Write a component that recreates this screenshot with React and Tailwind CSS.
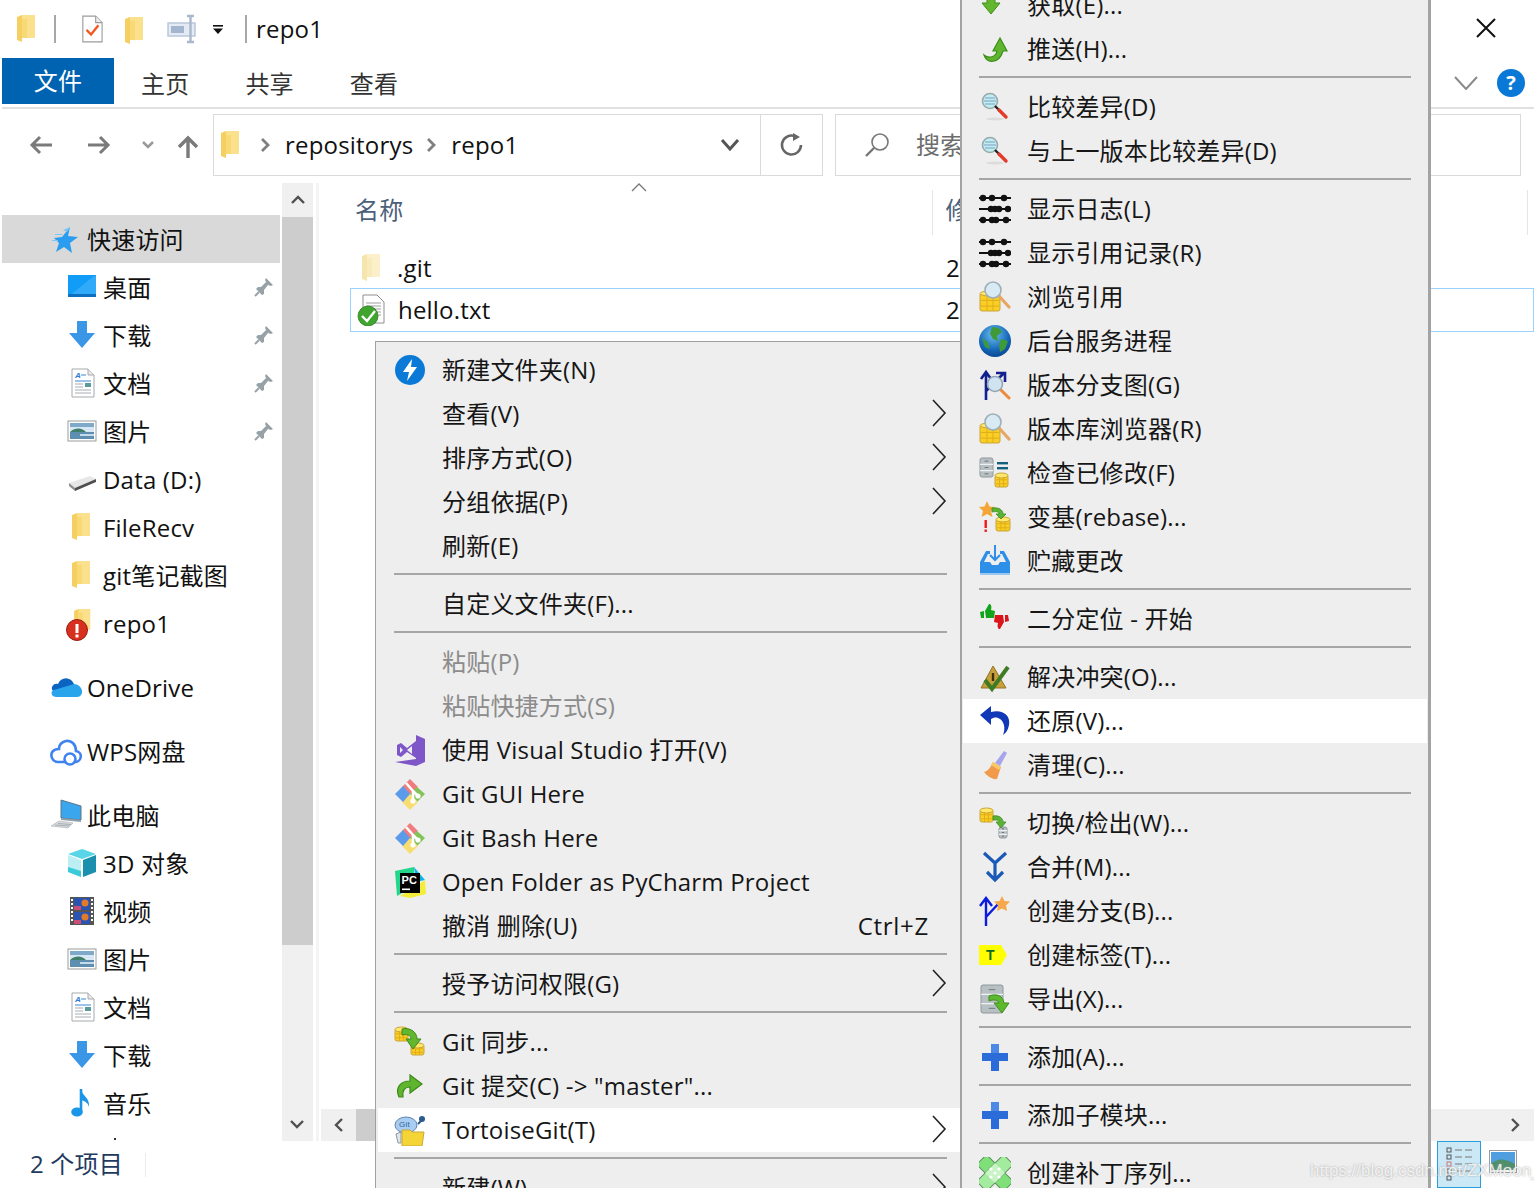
import React from "react";

const Svg = ({ w = 32, h = 32, vb, children, className = "" }) => (
  <svg width={w} height={h} viewBox={vb || `0 0 ${w} ${h}`} className={`shrink-0 ${className}`}>{children}</svg>
);

/* ---------- shared pieces ---------- */
const Coins = ({ x, y, w, h }) => (
  <g>
    <rect x={x} y={y + 2} width={w} height={h - 3} rx={2} fill="#f8cf22" stroke="#c9a43a" strokeWidth="1" />
    <ellipse cx={x + w / 2} cy={y + 2.5} rx={w / 2} ry={2.5} fill="#ffe86a" stroke="#c9a43a" strokeWidth="1" />
    <path d={`M${x + 1} ${y + h * 0.45}H${x + w - 1}M${x + 1} ${y + h * 0.72}H${x + w - 1}M${x + w * 0.35} ${y + 4}V${y + h - 1}M${x + w * 0.65} ${y + 4}V${y + h - 1}`} stroke="#e2ad1c" strokeWidth="1" />
  </g>
);
const Cabinet = ({ x, y, w, h }) => (
  <g>
    <rect x={x} y={y} width={w} height={h} rx={2} fill="#b9c0c4" stroke="#8f989d" strokeWidth="1" />
    <path d={`M${x} ${y + h / 3}H${x + w}M${x} ${y + (2 * h) / 3}H${x + w}`} stroke="#eef1f2" strokeWidth="1.4" />
    <path d={`M${x + w * 0.35} ${y + h / 6}H${x + w * 0.65}M${x + w * 0.35} ${y + h / 2}H${x + w * 0.65}M${x + w * 0.35} ${y + (5 * h) / 6}H${x + w * 0.65}`} stroke="#6f777b" strokeWidth="1" />
  </g>
);

const FolderIcon = ({ pale, w = 20, h = 28 }) => (
  <Svg w={w} h={h} vb="0 0 20 28">
    <path d="M0 2L5 0H18V23H5V27L0 25Z" fill={pale ? "#f6e6ae" : "#f6cf63"} />
    <path d="M5 0H18V23H5Z" fill={pale ? "#fbf0c9" : "#fbe08e"} />
    <path d="M5 4H10V23H5Z" fill={pale ? "#f8ebbb" : "#f9d974"} />
  </Svg>
);

/* ---------- menu icons ---------- */
const IBolt = () => (
  <Svg>
    <circle cx="16" cy="16" r="15" fill="#0b7ad6" />
    <path d="M18 5L9 18H15L13 27L23 13H17Z" fill="#fff" />
  </Svg>
);
const IVS = () => (
  <Svg>
    <path d="M22 1L31 5V28L22 32L1 28L22 25Z" fill="#7f56c8" />
    <path d="M3 11L7 9L13 14L22 7V24L13 18L7 23L3 21Z" fill="#7f56c8" />
    <path d="M6 13V19L9 16Z M18 12L13 16L18 20Z" fill="#eeeeee" />
  </Svg>
);
const IGit = () => (
  <Svg>
    <path d="M16 1L24 9L16 17L8 9Z" fill="#ef7d7d" />
    <path d="M23 9L31 16L23 24L16 16Z" fill="#82c45a" />
    <path d="M16 16L24 24L16 32L8 24Z" fill="#f7dd6f" />
    <path d="M9 8L16 16L9 24L1 16Z" fill="#5b9bea" />
    <path d="M12 5L19 13M19 13V22M19 13L23 17" stroke="#fff" strokeWidth="2.6" fill="none" />
    <circle cx="19" cy="23" r="2.6" fill="#fff" />
    <circle cx="24" cy="18" r="2.6" fill="#fff" />
  </Svg>
);
const IPC = () => (
  <Svg>
    <path d="M1 5L20 1L20 20L3 30Z" fill="#21d789" />
    <path d="M20 1L31 14L22 16Z" fill="#09b6e8" />
    <path d="M6 30L31 14L32 28L16 32Z" fill="#f4ee3b" />
    <rect x="6" y="7" width="20" height="20" fill="#000" />
    <text x="7.5" y="18" fill="#fff" fontSize="11" fontWeight="700" fontFamily="Liberation Sans, sans-serif">PC</text>
    <rect x="8" y="22.5" width="8" height="1.6" fill="#fff" />
  </Svg>
);
const ISync = () => (
  <Svg>
    <Coins x={1} y={1} w={13} h={15} />
    <Coins x={17} y={17} w={13} h={13} />
    <path d="M8 3C16 1 23 6 23 13H27L19 23L12 13H17C17 9 13 8 8 9Z" fill="#63b72f" stroke="#3f8a17" strokeWidth="1" />
  </Svg>
);
const ICommit = () => (
  <Svg>
    <path d="M5 27C1 18 6 11 16 11V5L28 14L16 23V17C11 17 8 20 9 27Z" fill="#5fb52e" stroke="#3d8a19" strokeWidth="1.2" />
  </Svg>
);
const ITortoise = () => (
  <Svg>
    <ellipse cx="12" cy="11" rx="11" ry="8" fill="#a9cdf0" stroke="#5d86b5" strokeWidth="1" />
    <text x="5" y="13" fontSize="8" fill="#2b5f9a" fontFamily="Liberation Sans, sans-serif">Git</text>
    <circle cx="28" cy="5" r="3" fill="#2a5a8f" />
    <path d="M24 10L28 6" stroke="#2a5a8f" strokeWidth="2" />
    <path d="M2 20L7 18V29H4Z" fill="#dfe7ee" stroke="#8a97a3" strokeWidth="1" />
    <path d="M8 16H16L18 18H30L28 32H8Z" fill="#f5d535" stroke="#c7a73a" strokeWidth="1" />
  </Svg>
);
const IPull = () => (
  <Svg>
    <path d="M8 0H16V14H21L12 25L3 14H8Z" fill="#62b72e" stroke="#3f8f1c" strokeWidth="1" />
  </Svg>
);
const IPush = () => (
  <Svg>
    <path d="M5 22C8 31 20 31 24 18H28L21 5L14 18H18C17 24 10 26 5 22Z" fill="#5fb52e" stroke="#3c8d19" strokeWidth="1.2" />
  </Svg>
);
const IDiff = () => (
  <Svg>
    <ellipse cx="16" cy="28" rx="9" ry="1.5" fill="#dcdcdc" />
    <circle cx="11" cy="10" r="7.5" fill="#bfeef0" stroke="#9aa9ad" strokeWidth="1.6" />
    <path d="M6 7H16M5 10H17M6 13H16" stroke="#7f9cc4" strokeWidth="1" />
    <path d="M16 15L20 19" stroke="#222" strokeWidth="2.4" />
    <path d="M20 19L27 26" stroke="#e33a2c" strokeWidth="3.4" strokeLinecap="round" />
  </Svg>
);
const ILog = () => {
  const rows = [
    [5, [4, 13, 25]],
    [16, [12, 16, 20, 29]],
    [27, [4, 13, 17, 27]],
  ];
  return (
    <Svg>
      {rows.map(([y, xs]) => (
        <g key={y}>
          <path d={`M0 ${y}H32`} stroke="#111" strokeWidth="2" />
          {xs.map((x) => (
            <circle key={x} cx={x} cy={y} r="3.2" fill="#111" />
          ))}
        </g>
      ))}
    </Svg>
  );
};
const IBrowse = () => (
  <Svg>
    <Coins x={1} y={10} w={20} h={21} />
    <path d="M20 15L30 26" stroke="#e6a765" strokeWidth="3.2" strokeLinecap="round" />
    <circle cx="14" cy="9" r="8" fill="#d8ebf4" stroke="#9fafb8" strokeWidth="1.6" />
  </Svg>
);
const IGlobe = () => (
  <Svg>
    <defs>
      <radialGradient id="gl" cx="0.45" cy="0.3" r="0.8">
        <stop offset="0" stopColor="#6cc0f2" />
        <stop offset="0.6" stopColor="#1667b8" />
        <stop offset="1" stopColor="#063a80" />
      </radialGradient>
    </defs>
    <circle cx="16" cy="16" r="16" fill="url(#gl)" />
    <path d="M13 2L20 3L23 7L18 11L19 16L14 14L11 9Z M22 14L29 16L26 24L21 27L20 20Z M3 13L9 17L11 24L6 22Z" fill="#3f9a3a" />
  </Svg>
);
const IGraph = () => (
  <Svg>
    <path d="M7 31V4M2 10L7 3L12 10M7 22L25 4M17 4H26V13" stroke="#10208e" strokeWidth="2.6" fill="none" />
    <path d="M21 20L30 29" stroke="#ef8a3a" strokeWidth="3" strokeLinecap="round" />
    <circle cx="16" cy="15" r="7.5" fill="#cfe3f0" stroke="#94a6b4" strokeWidth="1.6" />
  </Svg>
);
const ICheck = () => (
  <Svg>
    <Cabinet x={1} y={1} w={13} h={19} />
    <rect x="18" y="5" width="11" height="2.4" fill="#16607e" />
    <rect x="18" y="10" width="11" height="2.4" fill="#16607e" />
    <Coins x={16} y={16} w={13} h={15} />
  </Svg>
);
const IRebase = () => (
  <Svg>
    <path d="M8 0L10.5 5.5L16 6L12 10L13.5 16L8 13L2.5 16L4 10L0 6L5.5 5.5Z" fill="#f4a535" />
    <rect x="5.5" y="19" width="2.4" height="8" fill="#f01818" />
    <rect x="5.5" y="28.5" width="2.4" height="2.4" fill="#f01818" />
    <Coins x={17} y={16} w={14} h={15} />
    <path d="M13 7C20 6 24 9 24 13H27L22 18L17 13H20C20 11 18 10 13 11Z" fill="#5cb234" stroke="#3e8a1f" strokeWidth="0.8" />
  </Svg>
);
const IStash = () => (
  <Svg>
    <path d="M1 17L7 6H11V9H9L5 17H11L13 20H19L21 17H27L23 9H21V6H25L31 17V29H1Z" fill="#2e8fe8" />
    <path d="M16 0V14M11 10L16 15L21 10" stroke="#2e8fe8" strokeWidth="2" fill="none" />
    <rect x="1" y="28" width="30" height="2" fill="#9bc7ee" />
  </Svg>
);
const Thumb = ({ fill }) => (
  <path d="M1 9L5 8V15H2Z M6 8L10 1C12 1 13 3 12 7L16 8L15 15L7 15Z" fill={fill} />
);
const IBisect = () => (
  <Svg>
    <Thumb fill="#12a51c" />
    <g transform="translate(31 27) rotate(180)">
      <Thumb fill="#d9161c" />
    </g>
  </Svg>
);
const IResolve = () => (
  <Svg>
    <path d="M14 5L27 27H2Z" fill="#c9a038" stroke="#8f7326" strokeWidth="1" />
    <rect x="12.8" y="12" width="2.4" height="8" fill="#3a2f10" />
    <path d="M6 19L13 28L29 6" stroke="#3f7a25" strokeWidth="4" fill="none" />
  </Svg>
);
const IRevert = () => (
  <Svg>
    <path d="M1 10L12 1V7C23 4 32 10 30 20C29 25 27 28 24 30C27 23 25 15 19 13C16 12 14 13 12 14V20Z" fill="#1138b6" />
  </Svg>
);
const IClean = () => (
  <Svg>
    <path d="M25 2L28 4L21 17L16 14Z" fill="#a6a4ec" />
    <path d="M14 13L22 18L18 30C14 31 8 27 5 23C9 22 12 18 14 13Z" fill="#f29a4b" />
    <path d="M14 13L22 18L20 21L12 16Z" fill="#f7c96a" />
  </Svg>
);
const ISwitch = () => (
  <Svg>
    <Coins x={1} y={1} w={13} h={15} />
    <Cabinet x={20} y={20} w={8} h={11} />
    <path d="M14 9C20 8 24 11 24 15H27L22 21L17 15H20C20 13 18 13 14 13Z" fill="#5cb234" stroke="#3e8a1f" strokeWidth="0.8" />
  </Svg>
);
const IMerge = () => (
  <Svg>
    <path d="M5 2L16 12L27 2M16 12V28M8 21L16 29L24 21" stroke="#1a59b8" strokeWidth="3.2" fill="none" />
  </Svg>
);
const IBranch = () => (
  <Svg>
    <path d="M7 31V5M1 11L7 3L13 11M7 22L21 7" stroke="#0b1be0" strokeWidth="2.4" fill="none" />
    <path d="M23 1L25.5 6L31 6.5L27 10.5L28 16L23 13.5L18 16L19 10.5L15 6.5L20.5 6Z" fill="#f6a84d" />
  </Svg>
);
const ITag = () => (
  <Svg>
    <path d="M0 6H22L28 16L22 26H0Z" fill="#ffff00" />
    <text x="7" y="21" fontSize="14" fontWeight="700" fill="#0a6b1e" fontFamily="Liberation Sans, sans-serif">T</text>
  </Svg>
);
const IExport = () => (
  <Svg>
    <Cabinet x={2} y={2} w={22} h={28} />
    <path d="M10 13C18 10 24 13 25 20H30L23 30L15 20H20C19 17 15 16 10 18Z" fill="#5cb82d" stroke="#3f8f1c" strokeWidth="1" />
  </Svg>
);
const IAdd = () => (
  <Svg>
    <path d="M12 3H20V12H29V20H20V30H12V20H3V12H12Z" fill="#2c6cd8" />
    <path d="M12 3H20V12H12Z" fill="#4d8ae6" />
  </Svg>
);
const IPatch = () => (
  <Svg>
    <g transform="rotate(45 16 16)">
      <rect x="-3" y="9" width="38" height="14" rx="2" fill="#7fe07a" stroke="#5c8d5c" strokeWidth="1" />
    </g>
    <g transform="rotate(-45 16 16)">
      <rect x="-3" y="9" width="38" height="14" rx="2" fill="#a3eb9e" stroke="#5c8d5c" strokeWidth="1" />
      <rect x="9" y="9" width="14" height="14" fill="#c8f3c4" />
    </g>
    {[[12, 12], [20, 12], [12, 20], [20, 20], [16, 16]].map(([x, y]) => (
      <circle key={`${x}${y}`} cx={x} cy={y} r="1.6" fill="#fff" />
    ))}
  </Svg>
);

/* ---------- sidebar icons ---------- */
const SStar = () => (
  <Svg>
    <path d="M20 4L18 13L28 14L20 20L22 30L14 24L6 29L9 20L4 15L12 14Z" fill="#2a9df0" />
    <path d="M13 7L20 4L17 9Z M5 11H12V12H5Z M2 17H8V18H2Z" fill="#7cc6f6" />
  </Svg>
);
const SDesktop = () => (
  <Svg>
    <rect x="2" y="4" width="28" height="22" fill="#119cf7" />
    <path d="M3 25L28 5H30V26H3Z" fill="#3fb2fa" opacity="0.7" />
    <rect x="2" y="23" width="28" height="3" fill="#0d6fc0" />
  </Svg>
);
const SDown = () => (
  <Svg>
    <path d="M11 2H21V14H29L16 29L3 14H11Z" fill="#3b96e6" />
  </Svg>
);
const SDoc = () => (
  <Svg>
    <path d="M6 2H22L28 8V30H6Z" fill="#fff" stroke="#a5a9ad" strokeWidth="1" />
    <path d="M22 2V8H28" fill="#e8e8e8" stroke="#a5a9ad" strokeWidth="1" />
    <text x="9" y="11" fontSize="8" fontWeight="700" fontStyle="italic" fill="#2a7ad0" fontFamily="Liberation Sans, sans-serif">A</text>
    <path d="M15 8H20M9 14H25" stroke="#3a8ad8" strokeWidth="1" />
    <rect x="19" y="16" width="6" height="4" fill="#5a9a9a" />
    <path d="M9 17H17M9 20H17M9 23H25M9 26H25" stroke="#a8adb2" strokeWidth="1" />
  </Svg>
);
const SPic = () => (
  <Svg>
    <rect x="2" y="6" width="28" height="20" fill="#fff" stroke="#9b9b9b" strokeWidth="1" />
    <rect x="4" y="8" width="24" height="16" fill="#d6e8f4" />
    <rect x="4" y="8" width="24" height="4" fill="#7fa9c9" />
    <path d="M4 17C10 12 16 13 20 17H4Z" fill="#3f7f6a" />
    <rect x="4" y="17" width="24" height="7" fill="#5e8fb0" />
    <path d="M14 19H28V21H14Z" fill="#c4dbe8" />
  </Svg>
);
const SDrive = () => (
  <Svg>
    <path d="M3 20L24 13L30 16L9 25Z" fill="#e7e7e7" />
    <path d="M3 20L9 25V28L3 23Z" fill="#8e8e8e" />
    <path d="M9 25L30 16V19L9 28Z" fill="#4f4f4f" />
  </Svg>
);
const SRepo = () => (
  <div className="relative h-[32px] w-[32px]">
    <div className="absolute left-[8px] top-[2px]"><FolderIcon w={18} h={25} /></div>
    <svg width="24" height="24" viewBox="0 0 24 24" className="absolute left-0 top-[12px]">
      <circle cx="11" cy="11" r="10.5" fill="#d8301e" stroke="#9b1d10" strokeWidth="1" />
      <rect x="9.5" y="5" width="3" height="9" fill="#fff" />
      <rect x="9.5" y="15.5" width="3" height="3" fill="#fff" />
    </svg>
  </div>
);
const SOne = () => (
  <Svg>
    <path d="M9 22C4 22 1 19 2 16C3 13 6 12 8 13C10 8 15 6 19 8C22 9 24 12 24 14L9 22Z" fill="#0a64c0" />
    <path d="M6 26C1 26 0 20 4 19L24 13C29 13 33 18 32 22C31 25 29 26 27 26Z" fill="#2aa4ea" />
  </Svg>
);
const SWps = () => (
  <Svg>
    <path d="M8 27H25C32 27 33 17 26 16C26 9 21 5 16 6C12 7 9 10 9 14C3 14 0 18 2 23C3 25 5 27 8 27Z" fill="none" stroke="#3e83f0" strokeWidth="2.6" />
    <circle cx="20" cy="24" r="5.5" fill="#fff" stroke="#3e83f0" strokeWidth="2.6" />
  </Svg>
);
const SPC = () => (
  <Svg>
    <path d="M11 1L31 7V21L11 19Z" fill="#39a6ee" stroke="#5f7684" strokeWidth="1" />
    <path d="M11 19L31 21V23L11 21Z" fill="#8ea0ab" />
    <path d="M1 27L9 22L23 24L18 29Z" fill="#d8dcde" stroke="#a9afb3" strokeWidth="0.6" />
    <path d="M5 26L19 27M8 24.5L21 25.5" stroke="#9aa0a4" strokeWidth="0.8" />
  </Svg>
);
const S3D = () => (
  <Svg>
    <path d="M16 2L30 7L16 12L2 7Z" fill="#58d5e6" />
    <path d="M2 8L15 13V30L2 25Z" fill="#bdeef3" />
    <path d="M17 13L30 8V25L17 30Z" fill="#1a8fae" />
    <path d="M2 20L15 24V30L2 25Z" fill="#3bcada" />
  </Svg>
);
const SFilm = () => (
  <Svg>
    <rect x="4" y="2" width="24" height="28" fill="#555" />
    <rect x="8" y="3" width="16" height="12" fill="#2b54b0" />
    <rect x="8" y="17" width="16" height="12" fill="#2b54b0" />
    <circle cx="19" cy="8" r="3.5" fill="#e27a2a" />
    <circle cx="19" cy="22" r="3.5" fill="#e27a2a" />
    <rect x="8" y="11" width="7" height="4" fill="#c94f7a" />
    <rect x="8" y="25" width="7" height="4" fill="#c94f7a" />
    {[4, 8, 12, 16, 20, 24].map((y) => (
      <g key={y}>
        <rect x="5" y={y} width="2" height="2" fill="#fff" />
        <rect x="25" y={y} width="2" height="2" fill="#fff" />
      </g>
    ))}
  </Svg>
);
const SMusic = () => (
  <Svg>
    <path d="M15 2V24" stroke="#1a96e8" strokeWidth="2.6" />
    <ellipse cx="11" cy="25" rx="5.8" ry="4.6" fill="#1a96e8" />
    <path d="M15 3C17 9 24 11 23 20C22 16 19 14 15 13Z" fill="#1a96e8" />
  </Svg>
);
const Pin = () => (
  <Svg w={20} h={20}>
    <path d="M12 1L19 8L17 9L14 8L10 13L10 17L8 18L2 12L4 10L7 10L12 5L11 3Z" fill="#97a2a8" />
    <path d="M5 15L1 19" stroke="#97a2a8" strokeWidth="2" />
  </Svg>
);

/* ---------- layout ---------- */
const Chevron = ({ className = "" }) => (
  <svg width="16" height="28" viewBox="0 0 16 28" className={`shrink-0 ${className}`}>
    <path d="M2 1L14 14L2 27" fill="none" stroke="#222" strokeWidth="1.6" />
  </svg>
);

const NavRow = ({ icon: I, text, pinned, child, active, className = "" }) => (
  <div className={`flex h-[48px] shrink-0 items-center ${child ? "pl-[64px]" : "pl-[48px]"} ${active ? "bg-[#d9d9d9]" : ""} ${className}`}>
    <div className="flex h-[32px] w-[32px] shrink-0 items-center justify-center"><I /></div>
    <span className="ml-[5px] whitespace-nowrap pt-[2px] text-[#111]">{text}</span>
    {pinned && <div className="ml-auto mr-[6px]"><Pin /></div>}
  </div>
);

const Sep = ({ className }) => (
  <div className={`h-[14px] pt-[5px] ${className}`}><div className="h-[2px] bg-[#a6a6a6]" /></div>
);

const MenuRow = ({ icon: I, text, hot, arrow, active, disabled }) => (
  <div className={`flex h-[44px] shrink-0 items-center pl-[16px] ${active ? "bg-white" : ""}`}>
    <div className="flex h-[32px] w-[32px] shrink-0 items-center justify-center">{I && <I />}</div>
    <span className={`ml-[16px] whitespace-nowrap ${disabled ? "text-[#8c8c8c]" : "text-[#161616]"}`}>{text}</span>
    {hot && <span className="ml-auto mr-[36px] tracking-[0.03em] text-[#161616]">{hot}</span>}
    {arrow && <Chevron className="ml-auto mr-[18px] -mt-[2px]" />}
  </div>
);

const Menu1 = () => (
  <div className="absolute left-[375px] top-[341px] w-[590px] border-l border-t border-[#a0a0a0] bg-[#eeeeee] pl-[2px] pt-[6px]">
    <MenuRow icon={IBolt} text="新建文件夹(N)" />
    <MenuRow text="查看(V)" arrow />
    <MenuRow text="排序方式(O)" arrow />
    <MenuRow text="分组依据(P)" arrow />
    <MenuRow text="刷新(E)" />
    <Sep className="ml-[16px] mr-[18px]" />
    <MenuRow text="自定义文件夹(F)..." />
    <Sep className="ml-[16px] mr-[18px]" />
    <MenuRow text="粘贴(P)" disabled />
    <MenuRow text="粘贴快捷方式(S)" disabled />
    <MenuRow icon={IVS} text="使用 Visual Studio 打开(V)" />
    <MenuRow icon={IGit} text="Git GUI Here" />
    <MenuRow icon={IGit} text="Git Bash Here" />
    <MenuRow icon={IPC} text="Open Folder as PyCharm Project" />
    <MenuRow text="撤消 删除(U)" hot="Ctrl+Z" />
    <Sep className="ml-[16px] mr-[18px]" />
    <MenuRow text="授予访问权限(G)" arrow />
    <Sep className="ml-[16px] mr-[18px]" />
    <MenuRow icon={ISync} text="Git 同步..." />
    <MenuRow icon={ICommit} text={'Git 提交(C) -> "master"...'} />
    <MenuRow icon={ITortoise} text="TortoiseGit(T)" arrow active />
    <Sep className="ml-[16px] mr-[18px]" />
    <MenuRow text="新建(W)" arrow />
  </div>
);

const Menu2 = () => {
  const S = () => <Sep className="ml-[16px] mr-[16px]" />;
  return (
    <div className="absolute left-[960px] top-[-17px] w-[471px] border-l-2 border-r-[3px] border-[#a3a3a3] bg-[#eeeeee] px-[1px]">
      <MenuRow icon={IPull} text="获取(E)..." />
      <MenuRow icon={IPush} text="推送(H)..." />
      <S />
      <MenuRow icon={IDiff} text="比较差异(D)" />
      <MenuRow icon={IDiff} text="与上一版本比较差异(D)" />
      <S />
      <MenuRow icon={ILog} text="显示日志(L)" />
      <MenuRow icon={ILog} text="显示引用记录(R)" />
      <MenuRow icon={IBrowse} text="浏览引用" />
      <MenuRow icon={IGlobe} text="后台服务进程" />
      <MenuRow icon={IGraph} text="版本分支图(G)" />
      <MenuRow icon={IBrowse} text="版本库浏览器(R)" />
      <MenuRow icon={ICheck} text="检查已修改(F)" />
      <MenuRow icon={IRebase} text="变基(rebase)..." />
      <MenuRow icon={IStash} text="贮藏更改" />
      <S />
      <MenuRow icon={IBisect} text="二分定位 - 开始" />
      <S />
      <MenuRow icon={IResolve} text="解决冲突(O)..." />
      <MenuRow icon={IRevert} text="还原(V)..." active />
      <MenuRow icon={IClean} text="清理(C)..." />
      <S />
      <MenuRow icon={ISwitch} text="切换/检出(W)..." />
      <MenuRow icon={IMerge} text="合并(M)..." />
      <MenuRow icon={IBranch} text="创建分支(B)..." />
      <MenuRow icon={ITag} text="创建标签(T)..." />
      <MenuRow icon={IExport} text="导出(X)..." />
      <S />
      <MenuRow icon={IAdd} text="添加(A)..." />
      <S />
      <MenuRow icon={IAdd} text="添加子模块..." />
      <S />
      <MenuRow icon={IPatch} text="创建补丁序列..." />
    </div>
  );
};

const UpCaret = () => (
  <svg width="14" height="10" viewBox="0 0 14 10"><path d="M1 8L7 2L13 8" fill="none" stroke="#505050" strokeWidth="2.4" /></svg>
);

export default function App() {
  return (
    <div className="relative flex h-[1188px] w-[1534px] flex-col overflow-hidden bg-white font-['Open_Sans','Noto_Sans_CJK_SC',sans-serif] text-[24px] leading-[32px] tracking-[0.008em] text-[#111]">
      {/* title bar */}
      <div className="flex h-[58px] shrink-0 items-center">
        <div className="ml-[17px]"><FolderIcon /></div>
        <div className="ml-[17px] h-[28px] w-[2px] bg-[#a8a8a8]" />
        <Svg w={22} h={28} className="ml-[25px]" vb="0 0 24 30">
          <path d="M2 1H16L23 8V29H2Z" fill="#fff" stroke="#9a9a9a" strokeWidth="1.2" />
          <path d="M16 1V8H23" fill="#eee" stroke="#9a9a9a" strokeWidth="1.2" />
          <path d="M6 16L11 21L19 11" fill="none" stroke="#f05a22" strokeWidth="2.6" />
        </Svg>
        <div className="ml-[22px] mt-[3px]"><FolderIcon /></div>
        <Svg w={30} h={30} className="ml-[22px]" vb="0 0 30 30">
          <rect x="1" y="9" width="27" height="13" fill="#e4ebf5" stroke="#b6c5da" strokeWidth="1.4" />
          <rect x="4" y="12" width="13" height="7" fill="#a3b5cf" />
          <path d="M20 2H27M23.5 2V28M20 28H27" stroke="#a9b8cc" strokeWidth="2.4" fill="none" />
        </Svg>
        <svg width="10" height="9" viewBox="0 0 10 9" className="ml-[16px]">
          <rect y="0" width="10" height="1.6" fill="#111" />
          <path d="M0 3.5H10L5 9Z" fill="#111" />
        </svg>
        <div className="ml-[22px] h-[28px] w-[2px] bg-[#a8a8a8]" />
        <span className="ml-[9px]">repo1</span>
        <svg width="20" height="20" viewBox="0 0 20 20" className="ml-auto mr-[38px] -mt-[2px]">
          <path d="M1 1L19 19M19 1L1 19" stroke="#111" strokeWidth="2" />
        </svg>
      </div>

      {/* ribbon tabs */}
      <div className="ml-[2px] flex h-[51px] shrink-0 items-start border-b-2 border-[#e0e0e0] text-[#333]">
        <div className="flex h-[46px] w-[112px] items-center justify-center bg-[#0063b1] text-white">文件</div>
        <span className="ml-[27px] mt-[10px]">主页</span>
        <span className="ml-[56px] mt-[10px]">共享</span>
        <span className="ml-[56px] mt-[10px]">查看</span>
        <svg width="24" height="14" viewBox="0 0 24 14" className="ml-auto mt-[18px]">
          <path d="M1 1L12 13L23 1" fill="none" stroke="#8a8a8a" strokeWidth="2" />
        </svg>
        <div className="ml-[19px] mr-[9px] mt-[11px] flex h-[28px] w-[28px] items-center justify-center rounded-full bg-[#0a78d7] text-[20px] font-bold text-white">?</div>
      </div>

      {/* address row */}
      <div className="mt-[5px] flex h-[62px] shrink-0 items-center">
        <svg width="24" height="20" viewBox="0 0 24 20" className="ml-[29px]"><path d="M23 10H3M11 2L3 10L11 18" fill="none" stroke="#7a7a7a" strokeWidth="3" /></svg>
        <svg width="24" height="20" viewBox="0 0 24 20" className="ml-[34px]"><path d="M1 10H21M13 2L21 10L13 18" fill="none" stroke="#7a7a7a" strokeWidth="3" /></svg>
        <svg width="14" height="10" viewBox="0 0 14 10" className="ml-[30px]"><path d="M2 2L7 7L12 2" fill="none" stroke="#9a9a9a" strokeWidth="2.6" /></svg>
        <svg width="22" height="24" viewBox="0 0 22 24" className="ml-[22px] mt-[4px]"><path d="M11 23V3M2 12L11 3L20 12" fill="none" stroke="#7a7a7a" strokeWidth="3.4" /></svg>
        <div className="ml-[14px] flex h-[62px] w-[610px] shrink-0 items-center border border-[#dadada]">
          <div className="ml-[7px]"><FolderIcon /></div>
          <svg width="10" height="14" viewBox="0 0 10 14" className="ml-[19px]"><path d="M2 1L8 7L2 13" fill="none" stroke="#7f7f7f" strokeWidth="2.8" /></svg>
          <span className="ml-[15px]">repositorys</span>
          <svg width="10" height="14" viewBox="0 0 10 14" className="ml-[13px]"><path d="M2 1L8 7L2 13" fill="none" stroke="#7f7f7f" strokeWidth="2.8" /></svg>
          <span className="ml-[15px]">repo1</span>
          <svg width="20" height="14" viewBox="0 0 20 14" className="ml-auto mr-[20px]"><path d="M2 2L10 11L18 2" fill="none" stroke="#555" strokeWidth="3" /></svg>
          <div className="flex h-full w-[62px] items-center justify-center border-l border-[#dadada]">
            <svg width="24" height="24" viewBox="0 0 24 24"><path d="M21 12A9.5 9.5 0 1 1 15 3.2" fill="none" stroke="#666" strokeWidth="2.6" /><path d="M13 0V8L20 4Z" fill="#666" /></svg>
          </div>
        </div>
        <div className="ml-[12px] flex h-[62px] w-[686px] shrink-0 items-center border border-[#dadada]">
          <svg width="26" height="26" viewBox="0 0 26 26" className="ml-[28px]"><circle cx="16" cy="10" r="8" fill="none" stroke="#777" strokeWidth="1.6" /><path d="M10 16L2 24" stroke="#777" strokeWidth="2.4" /></svg>
          <span className="ml-[26px] text-[#6d6d6d]">搜索</span>
        </div>
      </div>

      {/* body */}
      <div className="mt-[7px] flex h-[958px] shrink-0">
        <div className="ml-[2px] flex h-full w-[278px] shrink-0 flex-col overflow-hidden pt-[32px]">
          <NavRow icon={SStar} text="快速访问" active />
          <NavRow icon={SDesktop} text="桌面" child pinned />
          <NavRow icon={SDown} text="下载" child pinned />
          <NavRow icon={SDoc} text="文档" child pinned />
          <NavRow icon={SPic} text="图片" child pinned />
          <NavRow icon={SDrive} text="Data (D:)" child />
          <NavRow icon={() => <FolderIcon />} text="FileRecv" child />
          <NavRow icon={() => <FolderIcon />} text="git笔记截图" child />
          <NavRow icon={SRepo} text="repo1" child />
          <NavRow icon={SOne} text="OneDrive" className="mt-[16px]" />
          <NavRow icon={SWps} text="WPS网盘" className="mt-[16px]" />
          <NavRow icon={SPC} text="此电脑" className="mt-[16px]" />
          <NavRow icon={S3D} text="3D 对象" child />
          <NavRow icon={SFilm} text="视频" child />
          <NavRow icon={SPic} text="图片" child />
          <NavRow icon={SDoc} text="文档" child />
          <NavRow icon={SDown} text="下载" child />
          <NavRow icon={SMusic} text="音乐" child />
          <div className="ml-[112px] mt-[11px] h-[2px] w-[2px] shrink-0 bg-[#333]" />
        </div>

        {/* sidebar scrollbar */}
        <div className="ml-[2px] flex h-full w-[31px] shrink-0 flex-col bg-[#f0f0f0]">
          <div className="flex h-[34px] items-center justify-center"><UpCaret /></div>
          <div className="h-[728px] bg-[#cdcdcd]" />
          <div className="mt-auto flex h-[34px] rotate-180 items-center justify-center"><UpCaret /></div>
        </div>
        <div className="ml-[3px] h-full w-[3px] shrink-0 bg-[#f4f4f4]" />

        {/* file list */}
        <div className="relative ml-[2px] flex min-w-0 flex-1 flex-col">
          <div className="relative flex h-[65px] shrink-0 items-start text-[#4c607a]">
            <span className="ml-[34px] mt-[11px]">名称</span>
            <div className="ml-[529px] mt-[7px] h-[45px] w-px bg-[#e5e5e5]" />
            <span className="ml-[12px] mt-[11px]">修</span>
            <svg width="16" height="9" viewBox="0 0 16 9" className="absolute left-[310px] top-0"><path d="M1 8L8 1L15 8" fill="none" stroke="#777" strokeWidth="1.3" /></svg>
            <div className="ml-auto mr-[6px] mt-[7px] h-[45px] w-px bg-[#e5e5e5]" />
          </div>
          <div className="flex h-[40px] shrink-0 items-center">
            <div className="ml-[41px]"><FolderIcon pale /></div>
            <span className="ml-[15px]">.git</span>
            <span className="absolute left-[625px]">2</span>
          </div>
          <div className="ml-[29px] flex h-[44px] shrink-0 items-center border border-[#99d1ff]">
            <svg width="28" height="32" viewBox="0 0 28 32" className="ml-[6px]">
              <path d="M6 1H20L27 8V29H6Z" fill="#fff" stroke="#8f8f8f" strokeWidth="1" />
              <path d="M9 9H24M9 12H24M9 15H24M9 18H24M9 21H24" stroke="#9f9f9f" strokeWidth="1" />
              <circle cx="11" cy="22" r="10" fill="#3fa52e" stroke="#2c7a20" strokeWidth="0.8" />
              <path d="M5 22L10 27L18 17" fill="none" stroke="#fff" strokeWidth="2.4" />
            </svg>
            <span className="ml-[13px]">hello.txt</span>
            <span className="absolute left-[625px]">2</span>
          </div>
          <div className="mt-auto flex h-[32px] shrink-0 items-center bg-[#f0f0f0]">
            <div className="flex h-full w-[35px] items-center justify-center">
              <svg width="10" height="14" viewBox="0 0 10 14"><path d="M8 1L2 7L8 13" fill="none" stroke="#505050" strokeWidth="2.4" /></svg>
            </div>
            <div className="h-full w-[660px] bg-[#cdcdcd]" />
            <svg width="10" height="14" viewBox="0 0 10 14" className="ml-auto mr-[14px]"><path d="M2 1L8 7L2 13" fill="none" stroke="#505050" strokeWidth="2.4" /></svg>
          </div>
        </div>
      </div>

      {/* status bar */}
      <div className="flex flex-1 items-center text-[#1e3a5f]">
        <span className="ml-[30px] -mt-[2px]">2 个项目</span>
        <div className="ml-[22px] h-[24px] w-px bg-[#ececec]" />
        <div className="ml-auto flex h-full w-[44px] items-center justify-center border border-[#26a0da] bg-[#cbe8f6]">
          <svg width="28" height="38" viewBox="0 0 28 38">
            {[2, 9, 16, 23, 30].map((y, i) => (
              <rect key={y} x="2" y={y} width="4" height="4" fill="none" stroke={i === 2 ? "#c77" : "#555"} strokeWidth="1" />
            ))}
            <path d="M10 4H17M20 4H27M10 11H17M20 11H27M10 18H17M20 18H27M10 25H17M20 25H27" stroke="#777" strokeWidth="1" />
          </svg>
        </div>
        <svg width="28" height="24" viewBox="0 0 28 24" className="ml-[8px] mr-[17px] -mt-[6px]">
          <rect x="0.5" y="0.5" width="27" height="22" fill="#fff" stroke="#999" />
          <rect x="2" y="2" width="24" height="12" fill="#4f9ee0" />
          <path d="M2 14C8 8 16 8 26 14V20H2Z" fill="#4f8f6c" />
        </svg>
      </div>

      <Menu1 />
      <Menu2 />

      {/* watermark */}
      <div className="absolute left-[1310px] top-[1155px] whitespace-nowrap font-['Liberation_Sans',sans-serif] text-[17px] tracking-normal text-white/80 [text-shadow:0_0_2px_#9a9a9a]">
        https://blog.csdn.net/ZXMoon_
      </div>
    </div>
  );
}
